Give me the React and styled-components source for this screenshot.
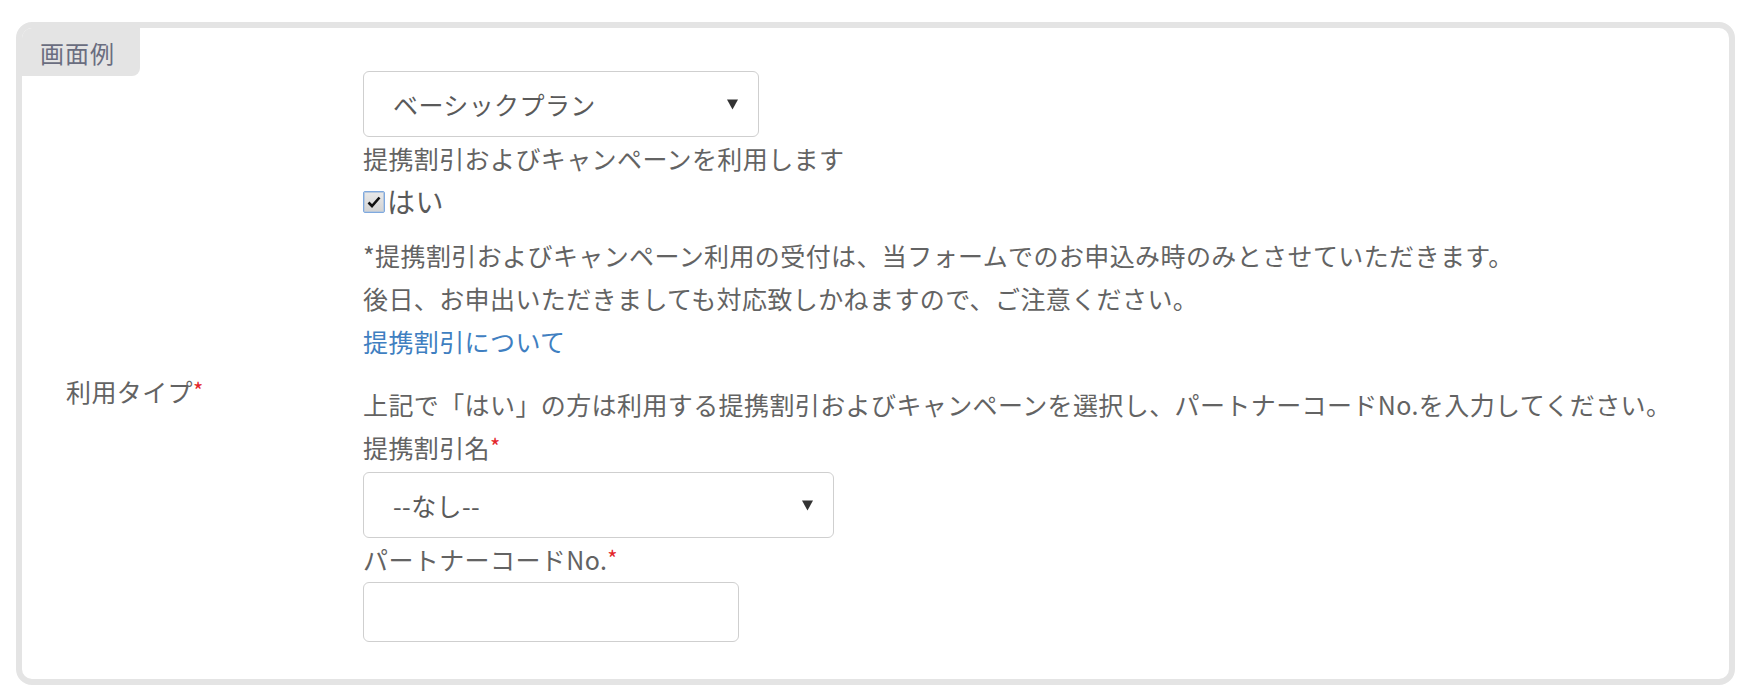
import styled, { createGlobalStyle } from "styled-components";

const GlobalStyle = createGlobalStyle`
  body {
    margin: 0;
    background: #fff;
    font-family: "Noto Sans CJK JP", "Noto Sans", sans-serif;
  }
`;

const Page = styled.div`
  padding: 22px 27px 15px 16px;
`;

const Panel = styled.section`
  position: relative;
  border: 6px solid #e4e4e4;
  border-radius: 16px;
  display: grid;
  grid-template-columns: 341px 1fr;
  padding: 43px 0 37px;
  color: #636363;
  font-size: 25px;
  line-height: 43px;
  letter-spacing: 0.4px;
`;

// the grey "画面例" tab tucked in the panel's corner
const Tab = styled.div`
  position: absolute;
  top: 0;
  left: 0;
  width: 118px;
  height: 48px;
  box-sizing: border-box;
  padding-left: 18px;
  display: flex;
  align-items: center;
  background: #e4e4e4;
  border-radius: 10px 0 8px 0;
  color: #6a6d80;
  font-size: 24px;
  letter-spacing: 1px;
`;

const LabelCell = styled.div`
  padding: 299px 0 0 44px;
`;

const Required = styled.span`
  color: #e3262b;
  font-size: 22px;
  vertical-align: top;
  position: relative;
  top: -2px;
`;

const FieldCell = styled.div`
  display: flex;
  flex-direction: column;
  align-items: flex-start;
`;

const SelectBox = styled.div`
  width: ${props => props.$width}px;
  height: 66px;
  margin-top: ${props => props.$top || 0}px;
  box-sizing: border-box;
  border: 1px solid #cfcfcf;
  border-radius: 6px;
  display: flex;
  align-items: center;
  justify-content: space-between;
  padding: 0 20px 0 29px;
  background: #fff;
  color: #5a5a5a;
`;

const Arrow = styled.svg`
  width: 11px;
  height: 11px;
  fill: #333;
`;

const Line = styled.div`
  margin-top: ${props => props.$top || 0}px;
  white-space: nowrap;
`;

const CheckRow = styled.label`
  display: flex;
  align-items: center;
  font-size: 28px;
  line-height: 43px;
  color: #5a5a5a;
`;

const CheckBox = styled.span`
  width: 22px;
  height: 22px;
  box-sizing: border-box;
  border: 1px solid #7fa9df;
  border-radius: 2px;
  background: linear-gradient(#e9e9e9, #d2d2d2);
  box-shadow: inset 0 0 0 1px #b9c9dc;
  display: flex;
  align-items: center;
  justify-content: center;
  margin-right: 2px;
`;

const Link = styled.a`
  color: #3f7fc1;
  text-decoration: none;
`;

const TextInput = styled.div`
  width: 376px;
  height: 60px;
  margin-top: 1px;
  box-sizing: border-box;
  border: 1px solid #cfcfcf;
  border-radius: 6px;
`;

function Select({ value, width, top }) {
  return (
    <SelectBox $width={width} $top={top}>
      <span>{value}</span>
      <Arrow viewBox="0 0 12 11">
        <polygon points="0,0 12,0 6,11" />
      </Arrow>
    </SelectBox>
  );
}

export default function App() {
  return (
    <Page>
      <GlobalStyle />
      <Panel>
        <Tab>画面例</Tab>
        <LabelCell>
          利用タイプ<Required>*</Required>
        </LabelCell>
        <FieldCell>
          <Select value="ベーシックプラン" width={396} />
          <Line>提携割引およびキャンペーンを利用します</Line>
          <CheckRow>
            <CheckBox>
              <svg width="14" height="12" viewBox="0 0 14 12">
                <path d="M1.5 6.5 L5 10 L12.5 1.5" stroke="#111" strokeWidth="2.6" fill="none" />
              </svg>
            </CheckBox>
            はい
          </CheckRow>
          <Line $top={11}>*提携割引およびキャンペーン利用の受付は、当フォームでのお申込み時のみとさせていただきます。</Line>
          <Line>後日、お申出いただきましても対応致しかねますので、ご注意ください。</Line>
          <Link href="#">提携割引について</Link>
          <Line $top={20}>上記で「はい」の方は利用する提携割引およびキャンペーンを選択し、パートナーコードNo.を入力してください。</Line>
          <Line>提携割引名<Required>*</Required></Line>
          <Select value="--なし--" width={471} top={3} />
          <Line>パートナーコードNo.<Required>*</Required></Line>
          <TextInput />
        </FieldCell>
      </Panel>
    </Page>
  );
}
